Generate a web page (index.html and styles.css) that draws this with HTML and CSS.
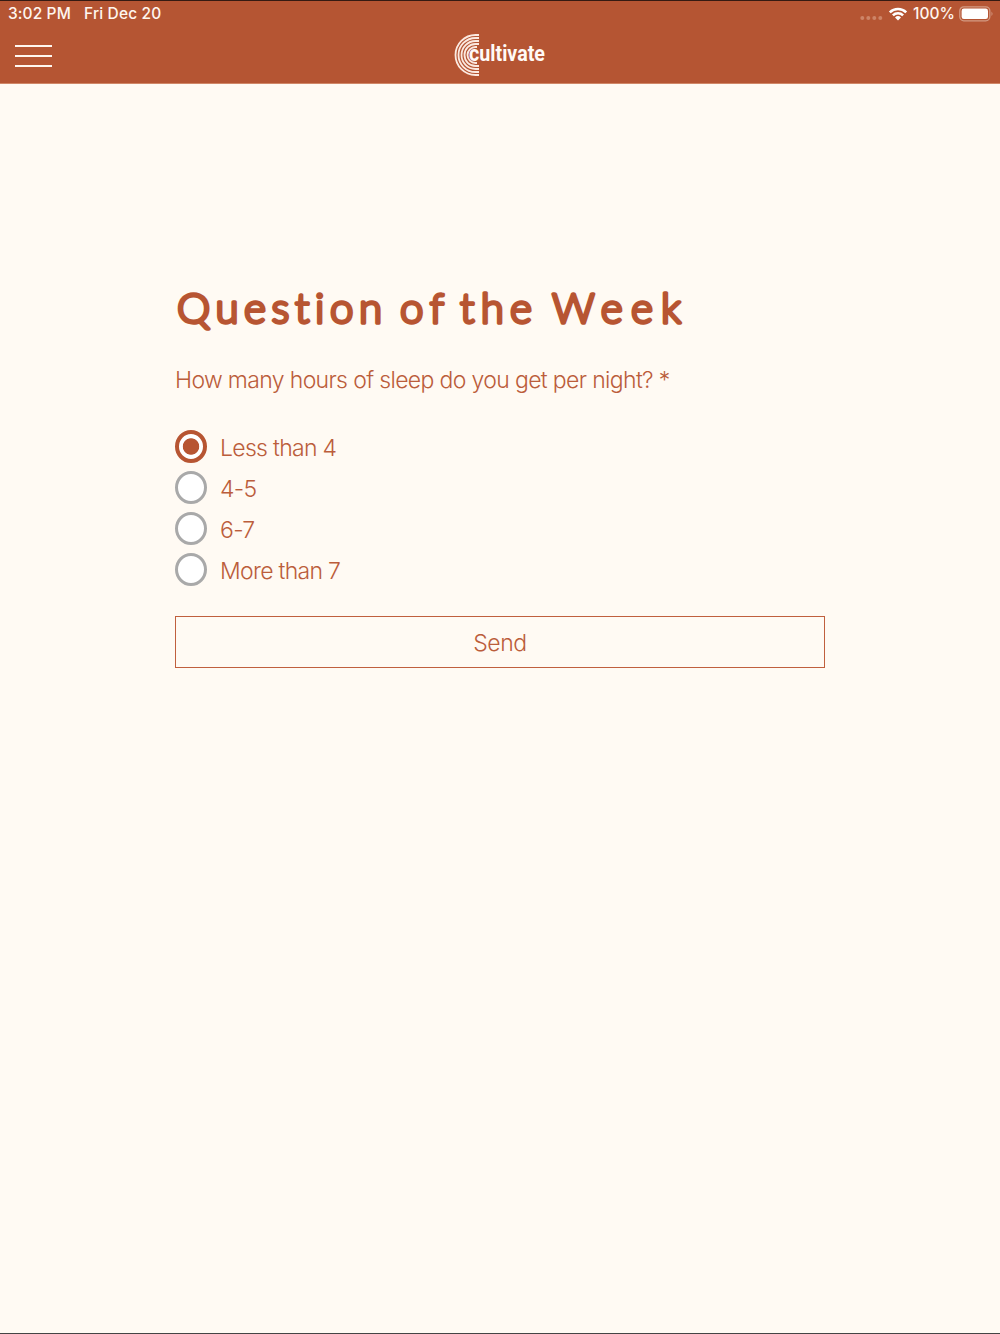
FILE: index.html
```
<!DOCTYPE html>
<html lang="en">
<head>
  <meta charset="UTF-8">
  <title>Cultivate</title>
  <link rel="stylesheet" href="styles.css">
</head>
<body>

<header>
  <div class="status">
    <span class="time">3:02 PM</span>
    <span class="date">Fri Dec 20</span>
    <div class="status-right">
      <svg class="dots" width="23" height="6" viewBox="0 0 23 6">
        <circle cx="2.3" cy="3" r="2"/><circle cx="8.3" cy="3" r="2"/><circle cx="14.3" cy="3" r="2"/><circle cx="20.3" cy="3" r="2"/>
      </svg>
      <svg class="wifi" width="20" height="14" viewBox="0 0 20 14">
        <path d="M1.8 5.4A11.6 11.6 0 0 1 18.2 5.4M4.9 8.4A7.3 7.3 0 0 1 15.1 8.4"/>
        <path class="wifi-tip" d="M10 13.5L7 10.5A4.3 4.3 0 0 1 13 10.5Z"/>
      </svg>
      <span class="percent">100%</span>
      <svg class="battery" width="36" height="16" viewBox="0 0 36 16">
        <rect class="battery-case" x=".8" y=".8" width="30" height="14" rx="4"/>
        <rect x="2.6" y="2.6" width="26.4" height="10.4" rx="2.3"/>
        <path class="battery-cap" d="M32.5 5.5Q34.5 7.8 32.5 10Z"/>
      </svg>
    </div>
  </div>
  <nav>
    <a class="menu" href="#" aria-label="Menu"><span></span><span></span><span></span></a>
    <a class="logo" href="#">
      <svg width="92" height="42" viewBox="0 0 92 42">
        <g class="rings">
          <path d="M25 1H21.5A20 20 0 0 0 21.5 41H25"/>
          <path d="M25 4H21.5A17 17 0 0 0 21.5 38H25"/>
          <path d="M25 7H21.5A14 14 0 0 0 21.5 35H25"/>
          <path d="M25 10H21.5A11 11 0 0 0 21.5 32H25"/>
          <path d="M23 13H21.5A8 8 0 0 0 21.5 29H23"/>
        </g>
        <text class="logo-text" x="15" y="27" textLength="76" lengthAdjust="spacingAndGlyphs">cultivate</text>
      </svg>
    </a>
  </nav>
</header>

<main>
  <h1>
    <svg width="520" height="72" viewBox="0 0 520 72">
      <text x="2" y="47" textLength="205">Question</text>
      <text x="225" y="47" textLength="44">of</text>
      <text x="285" y="47" textLength="72">the</text>
      <text x="377" y="47" textLength="129">Week</text>
    </svg>
  </h1>
  <form>
    <p class="question">How many hours of sleep do you get per night? *</p>
    <div class="options">
      <label><input type="radio" name="sleep" checked><span>Less than 4</span></label>
      <label><input type="radio" name="sleep"><span>4-5</span></label>
      <label><input type="radio" name="sleep"><span>6-7</span></label>
      <label><input type="radio" name="sleep"><span>More than 7</span></label>
    </div>
    <button type="button">Send</button>
  </form>
</main>

</body>
</html>
```

FILE: styles.css
```
* {
  box-sizing: border-box;
}
body {
  margin: 0;
  height: 1334px;
  background-color: #fffaf3;
  color: #bb5d3b;
  font-family: Inter, "Liberation Sans", sans-serif;
  border-top: 1px solid #351a12;
  border-bottom: 1px solid #444;
}
header {
  height: 83px;
  background-color: #b55533;
  color: #fff6ef;
  border-bottom: 1px solid #d08767;
}
.status {
  display: flex;
  align-items: center;
  height: 25px;
  padding: 0 7px 0 8px;
  font-size: 15.5px;
  font-weight: 500;
}
.time {
  width: 76px;
  letter-spacing: 0.1px;
}
.date {
  letter-spacing: 0.15px;
}
.status-right {
  display: flex;
  align-items: center;
  margin-left: auto;
}
.dots {
  fill: #cd8467;
  margin: 9px 5px 0 0;
}
.wifi {
  fill: none;
  stroke: #fff;
  stroke-width: 2.6;
  margin-right: 5px;
}
.wifi .wifi-tip {
  fill: #fff;
  stroke: none;
}
.percent {
  width: 46px;
}
.battery {
  fill: #fff;
  margin-right: -2px;
}
.battery .battery-case {
  fill: none;
  stroke: #d39a83;
  stroke-width: 1.3;
}
.battery .battery-cap {
  fill: #d39a83;
}
nav {
  display: grid;
  grid-template-columns: 1fr auto 1fr;
  align-items: start;
  padding: 8px 15px 0;
}
.menu {
  display: flex;
  flex-direction: column;
  gap: 8px;
  width: 37px;
  padding-top: 10.5px;
}
.menu span {
  height: 2px;
  background-color: #fff6ef;
}
.logo {
  display: block;
  height: 42px;
}
.logo svg {
  overflow: visible;
}
.rings {
  fill: none;
  stroke: #fbe9e0;
  stroke-width: 1.8;
}
.logo-text {
  font-family: Roboto, sans-serif;
  font-size: 22px;
  font-weight: 700;
  fill: #fffaf6;
}
main {
  width: 650px;
  margin: 0 auto;
  padding-top: 192px;
}
h1 {
  margin: 0;
  height: 88px;
}
h1 svg {
  display: block;
  overflow: visible;
}
h1 text {
  font-family: Lato, sans-serif;
  font-size: 42px;
  font-weight: 300;
  font-variant-ligatures: none;
  fill: #b75532;
  stroke: #b75532;
  stroke-width: 3.4;
  stroke-linejoin: round;
}
.question {
  margin: 0 0 34px;
  font-size: 23px;
  font-weight: 300;
  line-height: 32px;
  letter-spacing: -0.65px;
  white-space: nowrap;
}
.options {
  display: flex;
  flex-direction: column;
  gap: 8px;
}
label {
  display: flex;
  align-items: flex-start;
  gap: 13px;
  height: 33px;
  font-size: 23px;
  font-weight: 300;
  line-height: 28px;
  letter-spacing: -0.7px;
}
label span {
  padding-top: 4px;
}
input {
  appearance: none;
  width: 32px;
  height: 33px;
  margin: 0;
  border: 3px solid #a9a9a9;
  border-radius: 50%;
  background-color: #fff;
}
input:checked {
  border: 4px solid #b75532;
  background: radial-gradient(circle, #b75532 7.8px, #fff 8.6px);
}
button {
  display: block;
  width: 650px;
  height: 52px;
  margin-top: 30px;
  padding: 2px 0 0;
  border: 1px solid #c05f3d;
  background: none;
  color: #bb5d3b;
  font-family: inherit;
  font-size: 23px;
  font-weight: 300;
  letter-spacing: -0.4px;
}
```
